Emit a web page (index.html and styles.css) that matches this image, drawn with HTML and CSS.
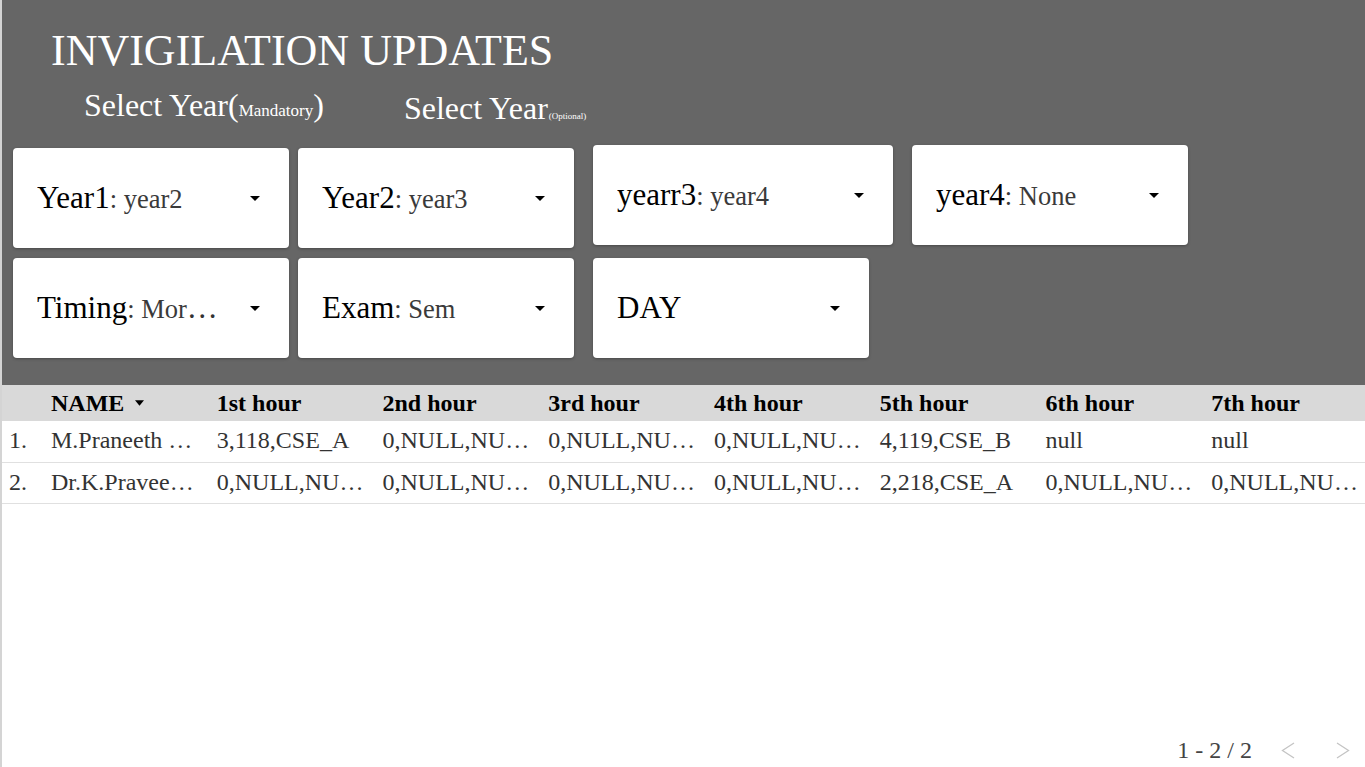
FILE: index.html
```html
<!DOCTYPE html>
<html lang="en">
<head>
<meta charset="utf-8">
<title>Invigilation Updates</title>
<link rel="stylesheet" href="styles.css">
</head>
<body>
<div class="page">
  <header class="top">
    <h1 class="title">INVIGILATION UPDATES</h1>
    <div class="subtitles">
      <div class="sub sub-mand">Select Year(<span class="note">Mandatory</span>)</div>
      <div class="sub sub-opt">Select Year<span class="tiny">(Optional)</span></div>
    </div>
    <div class="filters">
      <div class="row">
        <div class="pair pair-low">
          <div class="select"><span class="text"><span class="lbl">Year1</span><span class="val">: year2</span></span><svg class="arrow" viewBox="0 0 24 24"><path d="M7 10l5 5 5-5z"/></svg></div>
          <div class="select"><span class="text"><span class="lbl">Year2</span><span class="val">: year3</span></span><svg class="arrow" viewBox="0 0 24 24"><path d="M7 10l5 5 5-5z"/></svg></div>
        </div>
        <div class="select wide"><span class="text"><span class="lbl">yearr3</span><span class="val">: year4</span></span><svg class="arrow" viewBox="0 0 24 24"><path d="M7 10l5 5 5-5z"/></svg></div>
        <div class="select"><span class="text"><span class="lbl">year4</span><span class="val">: None</span></span><svg class="arrow" viewBox="0 0 24 24"><path d="M7 10l5 5 5-5z"/></svg></div>
      </div>
      <div class="row">
        <div class="pair">
          <div class="select"><span class="text"><span class="lbl">Timing</span><span class="val">: Morning</span></span><svg class="arrow" viewBox="0 0 24 24"><path d="M7 10l5 5 5-5z"/></svg></div>
          <div class="select"><span class="text"><span class="lbl">Exam</span><span class="val">: Sem</span></span><svg class="arrow" viewBox="0 0 24 24"><path d="M7 10l5 5 5-5z"/></svg></div>
        </div>
        <div class="select"><span class="text"><span class="lbl">DAY</span></span><svg class="arrow" viewBox="0 0 24 24"><path d="M7 10l5 5 5-5z"/></svg></div>
      </div>
    </div>
  </header>

  <table class="grid">
    <colgroup>
      <col class="num-col">
      <col><col><col><col><col><col><col><col>
    </colgroup>
    <thead>
      <tr>
        <th class="n"></th>
        <th>NAME<svg class="sort" viewBox="0 0 10 6"><path d="M0 0h10L5 6z"/></svg></th>
        <th>1st hour</th>
        <th>2nd hour</th>
        <th>3rd hour</th>
        <th>4th hour</th>
        <th>5th hour</th>
        <th>6th hour</th>
        <th>7th hour</th>
      </tr>
    </thead>
    <tbody>
      <tr>
        <td class="n">1.</td>
        <td>M.Praneeth Kumar</td>
        <td>3,118,CSE_A</td>
        <td>0,NULL,NULL</td>
        <td>0,NULL,NULL</td>
        <td>0,NULL,NULL</td>
        <td>4,119,CSE_B</td>
        <td>null</td>
        <td>null</td>
      </tr>
      <tr>
        <td class="n">2.</td>
        <td>Dr.K.Praveen Kumar</td>
        <td>0,NULL,NULL</td>
        <td>0,NULL,NULL</td>
        <td>0,NULL,NULL</td>
        <td>0,NULL,NULL</td>
        <td>2,218,CSE_A</td>
        <td>0,NULL,NULL</td>
        <td>0,NULL,NULL</td>
      </tr>
    </tbody>
  </table>

  <div class="pager">
    <span class="pg-label">1 - 2 / 2</span>
    <span class="pg-btn"><svg class="chev" viewBox="0 0 14 17"><polyline points="13,1 1.5,8.5 13,16"/></svg></span>
    <span class="pg-btn pg-next"><svg class="chev" viewBox="0 0 14 17"><polyline points="1,1 12.5,8.5 1,16"/></svg></span>
  </div>
</div>
</body>
</html>
```

FILE: styles.css
```css
* {
  box-sizing: border-box;
}

html,
body {
  margin: 0;
  padding: 0;
  background: #fff;
}

body {
  font-family: "Liberation Serif", "Times New Roman", serif;
}

.page {
  height: 767px;
  border-left: 2px solid #d4d4d4;
  display: flex;
  flex-direction: column;
  overflow: hidden;
}

.top {
  background: #666666;
  color: #fff;
  padding: 26px 0 27px 11px;
}

.title {
  margin: 0 0 11px 38px;
  font-size: 44px;
  font-weight: normal;
  line-height: 50px;
}

.subtitles {
  display: flex;
  align-items: flex-start;
  gap: 80px;
  margin-left: 71px;
  height: 40px;
  font-size: 32px;
  line-height: 36px;
}

.note {
  font-size: 17px;
}

.sub-opt {
  padding-top: 3px;
}

.tiny {
  font-size: 9px;
  margin-left: 1px;
}

.filters {
  margin-top: 18px;
  display: flex;
  flex-direction: column;
  gap: 10px;
}

.row {
  display: flex;
  align-items: flex-start;
  gap: 19px;
}

.pair {
  display: flex;
  gap: 9px;
}

.pair-low {
  margin-top: 3px;
}

.select {
  width: 276px;
  height: 100px;
  background: #fff;
  border-radius: 4px;
  box-shadow: 0 1px 3px rgba(0, 0, 0, 0.3);
  display: flex;
  align-items: center;
  padding: 0 22px 0 24px;
  color: #000;
}

.select.wide {
  width: 300px;
}

.text {
  flex: 1;
  min-width: 0;
  white-space: nowrap;
  overflow: hidden;
  text-overflow: ellipsis;
  margin-right: 21px;
  font-size: 31px;
  color: #333;
}

.lbl {
  color: #000;
}

.val {
  font-size: 26.5px;
  color: #3a3a3a;
}

.arrow {
  width: 24px;
  height: 24px;
  flex: none;
  fill: #000;
}

.grid {
  width: 1363px;
  border-collapse: collapse;
  table-layout: fixed;
  font-size: 24px;
  color: #333;
}

.grid .num-col {
  width: 37px;
}

.grid th {
  background: #d9d9d9;
  height: 36px;
  line-height: 36px;
  padding: 0 3px 0 12px;
  text-align: left;
  font-weight: bold;
  color: #000;
  white-space: nowrap;
}

.grid td {
  height: 41px;
  line-height: 38px;
  padding: 0 3px 2px 12px;
  border-bottom: 1px solid #e0e0e0;
  white-space: nowrap;
  overflow: hidden;
  text-overflow: ellipsis;
}

.grid .n {
  padding-left: 7px;
  padding-right: 0;
}

.sort {
  width: 9px;
  height: 6px;
  margin-left: 11px;
  vertical-align: 5px;
  fill: #000;
}

.pager {
  margin-top: auto;
  height: 34px;
  display: flex;
  justify-content: flex-end;
  align-items: center;
  padding-right: 2px;
  font-size: 24px;
  line-height: 34px;
  color: #444;
}

.pg-label {
  margin-right: 16px;
}

.pg-btn {
  width: 40px;
  height: 34px;
  display: flex;
  align-items: center;
  justify-content: center;
}

.pg-next {
  margin-left: 15px;
}

.chev {
  width: 14px;
  height: 17px;
  fill: none;
  stroke: #c4c4c4;
  stroke-width: 1.3;
}
```
